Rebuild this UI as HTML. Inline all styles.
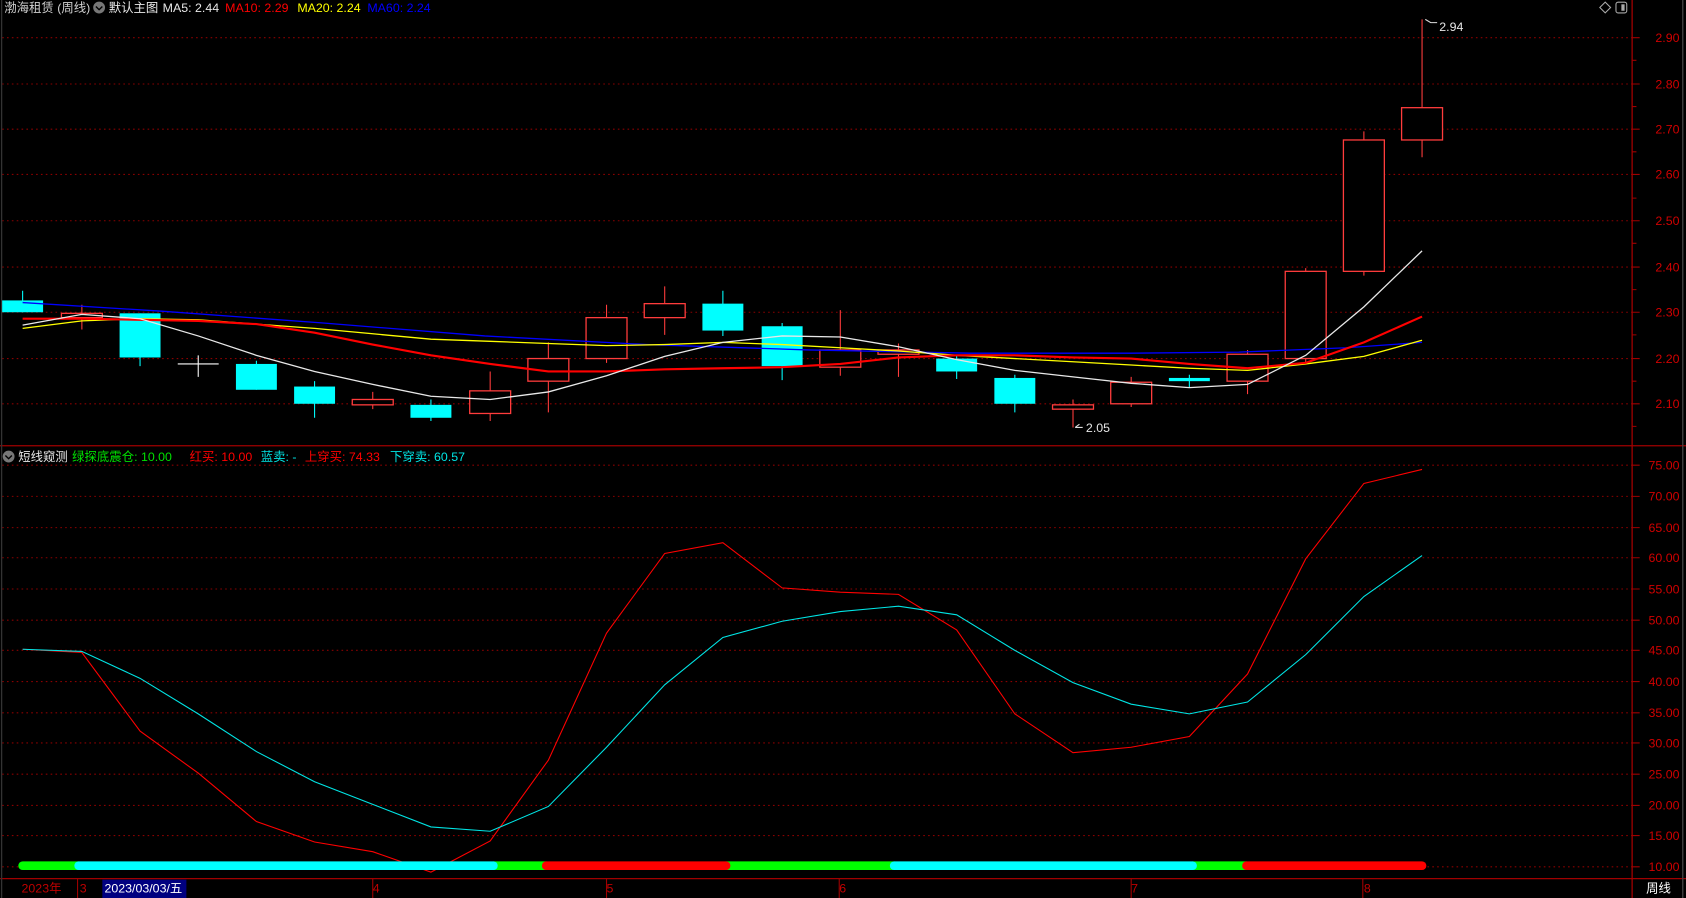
<!DOCTYPE html>
<html><head><meta charset="utf-8"><style>
html,body{margin:0;padding:0;background:#000;overflow:hidden}
svg{display:block}
text{font-family:"Liberation Sans","Noto Sans CJK SC",sans-serif;font-size:11.5px}
</style></head><body>
<svg width="1686" height="898" viewBox="0 0 1565 834" preserveAspectRatio="none" xmlns="http://www.w3.org/2000/svg">
<rect width="1565" height="834" fill="#000"/>
<!-- grid main -->
<g stroke="#8a0000" stroke-width="1" stroke-dasharray="1.5,3">
<line x1="2" x2="1515" y1="35" y2="35"/><line x1="2" x2="1515" y1="78" y2="78"/><line x1="2" x2="1515" y1="120" y2="120"/><line x1="2" x2="1515" y1="162" y2="162"/><line x1="2" x2="1515" y1="205" y2="205"/><line x1="2" x2="1515" y1="248" y2="248"/><line x1="2" x2="1515" y1="290" y2="290"/><line x1="2" x2="1515" y1="333" y2="333"/><line x1="2" x2="1515" y1="375" y2="375"/>
</g>
<g stroke="#8a0000" stroke-width="1" stroke-dasharray="1.5,3">
<line x1="2" x2="1515" y1="432" y2="432"/><line x1="2" x2="1515" y1="461" y2="461"/><line x1="2" x2="1515" y1="490" y2="490"/><line x1="2" x2="1515" y1="518" y2="518"/><line x1="2" x2="1515" y1="547" y2="547"/><line x1="2" x2="1515" y1="576" y2="576"/><line x1="2" x2="1515" y1="604" y2="604"/><line x1="2" x2="1515" y1="633" y2="633"/><line x1="2" x2="1515" y1="662" y2="662"/><line x1="2" x2="1515" y1="690" y2="690"/><line x1="2" x2="1515" y1="719" y2="719"/><line x1="2" x2="1515" y1="748" y2="748"/><line x1="2" x2="1515" y1="776" y2="776"/><line x1="2" x2="1515" y1="805" y2="805"/>
</g>
<!-- frame -->
<g stroke="#a00000" stroke-width="1.2" fill="none">
<line x1="1515" y1="0" x2="1515" y2="834"/>
<line x1="0" y1="414" x2="1565" y2="414"/>
<line x1="0" y1="816" x2="1565" y2="816"/>
<line x1="1.5" y1="0" x2="1.5" y2="834" stroke="#333"/>
<line x1="1562" y1="0" x2="1562" y2="834" stroke="#444"/>
</g>
<!-- axis ticks -->
<g stroke="#a00000">
<path d="M1515 35h7M1515 56h4M1515 78h7M1515 99h4M1515 120h7M1515 141h4M1515 162h7M1515 184h4M1515 205h7M1515 226h4M1515 248h7M1515 269h4M1515 290h7M1515 311h4M1515 333h7M1515 354h4M1515 375h7M1515 396h4"/>
<path d="M1515 432h7M1515 461h7M1515 490h7M1515 518h7M1515 547h7M1515 576h7M1515 604h7M1515 633h7M1515 662h7M1515 690h7M1515 719h7M1515 748h7M1515 776h7M1515 805h7"/>
</g>
<g fill="#d00000" text-anchor="end" font-size="12">
<text x="1559" y="39">2.90</text><text x="1559" y="82">2.80</text><text x="1559" y="124">2.70</text><text x="1559" y="166">2.60</text><text x="1559" y="209">2.50</text><text x="1559" y="252">2.40</text><text x="1559" y="294">2.30</text><text x="1559" y="337">2.20</text><text x="1559" y="379">2.10</text>
<text x="1559" y="436">75.00</text><text x="1559" y="465">70.00</text><text x="1559" y="494">65.00</text><text x="1559" y="522">60.00</text><text x="1559" y="551">55.00</text><text x="1559" y="580">50.00</text><text x="1559" y="608">45.00</text><text x="1559" y="637">40.00</text><text x="1559" y="666">35.00</text><text x="1559" y="694">30.00</text><text x="1559" y="723">25.00</text><text x="1559" y="752">20.00</text><text x="1559" y="780">15.00</text><text x="1559" y="809">10.00</text>
</g>
<!-- candles: wicks -->
<g stroke-width="1">
<g stroke="#00ffff">
<path d="M21 270V290M130 291V340M238 335V362M292 354V388M400 371V391M671 270V312M726 300V353M888 330V352M942 348V383M1104 348V360"/>
</g>
<g stroke="#ff3c3c">
<path d="M76 283V306M346 364V380M455 345V391M509 318V383M563 283V337M617 266V311M780 288V349M834 319V350M996 371V397M1050 350V378M1158 325V366M1212 249V337M1266 122V256M1320 18V146"/>
</g>
</g>
<g fill="#00ffff">
<rect x="2" y="279" width="38" height="11"/><rect x="111" y="291" width="38" height="41"/><rect x="219" y="338" width="38" height="24"/><rect x="273" y="359" width="38" height="16"/><rect x="381" y="376" width="38" height="12"/><rect x="652" y="282" width="38" height="25"/><rect x="707" y="303" width="38" height="37"/><rect x="869" y="333" width="38" height="12"/><rect x="923" y="351" width="38" height="24"/><rect x="1085" y="351" width="38" height="3"/>
</g>
<g fill="#000" stroke="#ff3c3c" stroke-width="1.2">
<rect x="57" y="291" width="38" height="4"/><rect x="327" y="371" width="38" height="5"/><rect x="436" y="363" width="38" height="21"/><rect x="490" y="333" width="38" height="21"/><rect x="544" y="295" width="38" height="38"/><rect x="598" y="282" width="38" height="13"/><rect x="761" y="325" width="38" height="16"/><rect x="815" y="325" width="38" height="4"/><rect x="977" y="376" width="38" height="4"/><rect x="1031" y="355" width="38" height="20"/><rect x="1139" y="329" width="38" height="25"/><rect x="1193" y="252" width="38" height="81"/><rect x="1247" y="130" width="38" height="122"/><rect x="1301" y="100" width="38" height="30"/>
</g>
<path d="M165 338H203M184 330V350" stroke="#fff" stroke-width="1"/>
<!-- MAs -->
<g fill="none" stroke-width="1.2">
<polyline stroke="#0000ff" points="21,281 150,289 300,300 450,312 600,320 750,325 900,328 1050,328 1150,327 1250,323 1320,318"/>
<polyline stroke="#ffff00" points="21,305 76,298 130,296 184,297 238,301 292,305 346,310 400,315 455,317 509,319 563,321 617,320 671,318 726,320 780,323 834,326 888,330 942,333 996,336 1050,339 1104,342 1158,344 1212,338 1266,331 1320,316"/>
<polyline stroke="#ff0000" stroke-width="2" points="21,296 76,296 130,297 184,298 238,301 292,309 346,320 400,330 455,338 509,345 563,345 617,343 671,342 726,341 780,338 834,332 888,330 942,330 996,332 1050,333 1104,338 1158,342 1212,337 1266,318 1320,294"/>
<polyline stroke="#e8e8e8" points="21,302 76,292 130,296 184,312 238,330 292,345 346,357 400,368 455,371 509,364 563,349 617,331 671,318 726,312 780,313 834,322 888,334 942,344 996,350 1050,356 1104,360 1158,357 1212,330 1266,285 1320,233"/>
</g>
<!-- labels -->
<path d="M1323 18l5 3h6" stroke="#ddd" fill="none"/>
<text x="1336" y="29" fill="#e6e6e6">2.94</text>
<path d="M998 397l4 -3M998 397h7" stroke="#ddd" fill="none"/>
<text x="1008" y="401" fill="#e6e6e6">2.05</text>
<!-- indicator -->
<g fill="none" stroke-width="1">
<polyline stroke="#ff0000" points="21,603 76,606 130,679 184,718 238,763 292,782 346,791 400,810 455,781 509,706 563,588 617,514 671,504 726,546 780,550 834,552 888,585 942,663 996,699 1050,694 1104,684 1158,626 1212,519 1266,449 1320,436"/>
<polyline stroke="#00e5e5" points="21,603 76,605 130,630 184,663 238,698 292,726 346,747 400,768 455,772 509,749 563,694 617,636 671,592 726,577 780,568 834,563 888,571 942,604 996,634 1050,654 1104,663 1158,652 1212,608 1266,554 1320,516"/>
</g>
<g stroke-width="8" stroke-linecap="round">
<line x1="21" x2="73" y1="804" y2="804" stroke="#00ff00"/>
<line x1="458" x2="507" y1="804" y2="804" stroke="#00ff00"/>
<line x1="674" x2="830" y1="804" y2="804" stroke="#00ff00"/>
<line x1="1107" x2="1157" y1="804" y2="804" stroke="#00ff00"/>
<line x1="73" x2="458" y1="804" y2="804" stroke="#00ffff"/>
<line x1="830" x2="1107" y1="804" y2="804" stroke="#00ffff"/>
<line x1="507" x2="674" y1="804" y2="804" stroke="#ff0000"/>
<line x1="1157" x2="1320" y1="804" y2="804" stroke="#ff0000"/>
</g>
<!-- bottom axis -->
<g stroke="#a00000"><path d="M72 816V834M346 816V834M563 816V834M779 816V834M1050 816V834M1265 816V834"/></g>
<g fill="#c00000" font-size="12">
<text x="20" y="829">2023年</text><text x="74" y="829">3</text><text x="346" y="829">4</text><text x="563" y="829">5</text><text x="779" y="829">6</text><text x="1050" y="829">7</text><text x="1266" y="829">8</text>
</g>
<rect x="95" y="817" width="78" height="17" fill="#000080"/>
<text x="97" y="829" fill="#fff" font-size="12">2023/03/03/五</text>
<text x="1528" y="829" fill="#fff" font-size="12">周线</text>
<!-- header -->
<text x="4" y="11" fill="#d0d0d0">渤海租赁 (周线)</text>
<circle cx="92" cy="7" r="5.5" fill="#777"/><path d="M89 6l3 3 3-3" stroke="#000" stroke-width="1.3" fill="none"/>
<text x="101" y="11" fill="#e8e8e8">默认主图</text>
<text x="151" y="11" fill="#e8e8e8">MA5: 2.44</text>
<text x="209" y="11" fill="#ff0000">MA10: 2.29</text>
<text x="276" y="11" fill="#ffff00">MA20: 2.24</text>
<text x="341" y="11" fill="#0000ff">MA60: 2.24</text>
<path d="M1490 2l5 5-5 5-5-5z" stroke="#aaa" fill="none"/>
<rect x="1500" y="2" width="10" height="10" rx="2" stroke="#aaa" fill="none"/><rect x="1505" y="4" width="3" height="6" fill="#aaa"/>
<circle cx="8" cy="424" r="5.5" fill="#777"/><path d="M5 423l3 3 3-3" stroke="#000" stroke-width="1.3" fill="none"/>
<text x="17" y="428" fill="#e8e8e8">短线窥测</text>
<text x="67" y="428" fill="#00e000">绿探底震仓: 10.00</text>
<text x="176" y="428" fill="#ff0000">红买: 10.00</text>
<text x="242" y="428" fill="#00e5e5">蓝卖: -</text>
<text x="283" y="428" fill="#ff0000">上穿买: 74.33</text>
<text x="362" y="428" fill="#00e5e5">下穿卖: 60.57</text>
</svg>
</body></html>
